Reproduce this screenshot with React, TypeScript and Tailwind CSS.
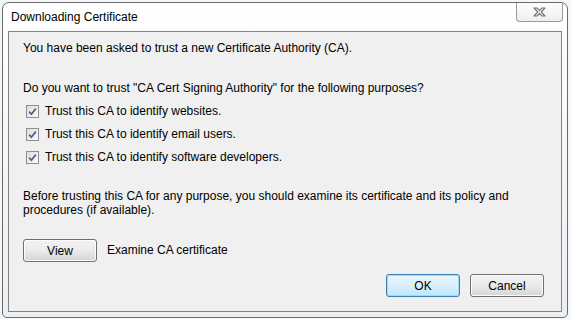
import React from "react";

const purposes = [
  "Trust this CA to identify websites.",
  "Trust this CA to identify email users.",
  "Trust this CA to identify software developers.",
];

const CheckBox = () => (
  <span className="flex h-[13px] w-[13px] items-center justify-center border border-[#8e8f8f] bg-gradient-to-br from-[#dcdcdc] to-[#fbfbfb]">
    <svg width="11" height="11" viewBox="0 0 11 11">
      <path d="M2.2 5.6 L4.4 8.2 L8.8 2.6" fill="none" stroke="#4a5f97" strokeWidth="1.7" />
    </svg>
  </span>
);

const WinButton = ({ label, isDefault }: { label: string; isDefault?: boolean }) => (
  <button
    className={
      "flex h-[23px] w-[74px] items-center justify-center rounded-[3px] border text-[12px] text-black " +
      (isDefault
        ? "border-[#3c7fb1] bg-gradient-to-b from-[#eaf6fd] via-[#d9f0fc] to-[#bee6fd] shadow-[inset_0_0_0_1px_#9fdcf5]"
        : "border-[#707070] bg-gradient-to-b from-[#f2f2f2] via-[#ebebeb] to-[#d5d5d5] shadow-[inset_0_0_0_1px_#fcfcfc]")
    }
  >
    {label}
  </button>
);

const App = () => {
  return (
    <div className="h-[319px] w-[571px] overflow-hidden bg-[#f4f6f8] pl-[2px] pt-[2px] font-['Liberation_Sans',sans-serif] text-[12px] text-black">
      <div className="flex h-[316px] w-[566px] flex-col rounded-t-[7px] rounded-b-[5px] border border-[#6b6b6b] bg-gradient-to-b from-[#ffffff] via-[#f4f6f8] to-[#eceff2]">
        {/* title bar */}
        <div className="flex h-[28px] items-start justify-between">
          <span className="pl-[8px] pt-[6px] leading-[16px]">Downloading Certificate</span>
          <div className="mr-[4px] flex h-[19px] w-[47px] items-center justify-center rounded-b-[4px] border border-t-0 border-[#9a9a9a] bg-gradient-to-b from-[#fdfdfd] to-[#eeeeee]">
            <svg width="13" height="10" viewBox="0 0 13 10">
              <path
                d="M1 1 L4 1 L6.5 3.6 L9 1 L12 1 L8.2 5 L12 9 L9 9 L6.5 6.4 L4 9 L1 9 L4.8 5 Z"
                fill="#fbfbfb"
                stroke="#6f737a"
                strokeWidth="1.1"
                strokeLinejoin="round"
              />
            </svg>
          </div>
        </div>

        {/* client area */}
        <div className="mx-[5px] flex h-[281px] flex-col border border-[#838383] bg-[#f0f0f0] px-[14px] pt-[9px]">
          <p className="leading-[15px]">You have been asked to trust a new Certificate Authority (CA).</p>
          <p className="mt-[25px] leading-[15px]">
            Do you want to trust "CA Cert Signing Authority" for the following purposes?
          </p>
          <div className="mt-[8px] flex flex-col gap-[8px] pl-[3px]">
            {purposes.map((p) => (
              <label key={p} className="flex h-[15px] items-center gap-[6px] leading-[15px]">
                <CheckBox />
                <span>{p}</span>
              </label>
            ))}
          </div>
          <p className="mt-[24px] leading-[14px]">
            Before trusting this CA for any purpose, you should examine its certificate and its policy and
            <br />
            procedures (if available).
          </p>
          <div className="mt-[22px] flex items-center gap-[10px]">
            <WinButton label="View" />
            <span className="-mt-[2px]">Examine CA certificate</span>
          </div>
          <div className="mt-[12px] flex justify-end gap-[10px] pr-[3px]">
            <WinButton label="OK" isDefault />
            <WinButton label="Cancel" />
          </div>
        </div>
      </div>
    </div>
  );
};

export default App;
